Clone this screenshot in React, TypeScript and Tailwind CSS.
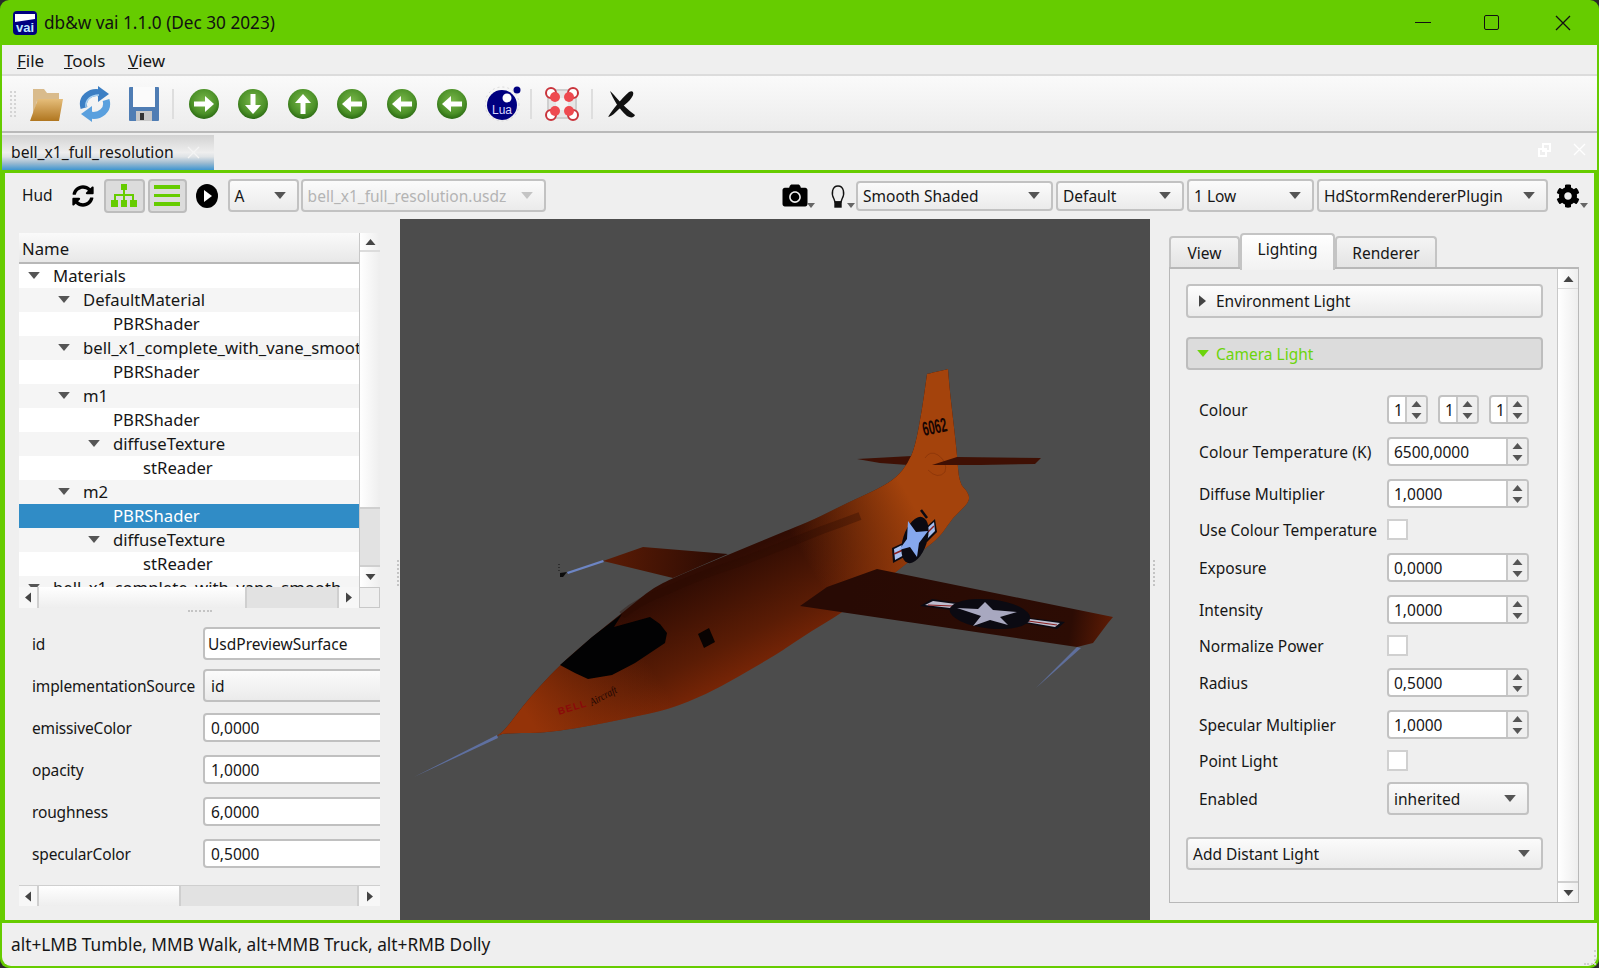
import { FaCamera, FaCog, FaSyncAlt } from 'react-icons/fa';

const treeRows = [
  { name: 'Materials', arrow: 'ml-[9px]', text: 'pl-[34px]', open: true },
  { name: 'DefaultMaterial', arrow: 'ml-[39px]', text: 'pl-[64px]', open: true },
  { name: 'PBRShader', text: 'pl-[94px]' },
  { name: 'bell_x1_complete_with_vane_smoothed_material', arrow: 'ml-[39px]', text: 'pl-[64px]', open: true },
  { name: 'PBRShader', text: 'pl-[94px]' },
  { name: 'm1', arrow: 'ml-[39px]', text: 'pl-[64px]', open: true },
  { name: 'PBRShader', text: 'pl-[94px]' },
  { name: 'diffuseTexture', arrow: 'ml-[69px]', text: 'pl-[94px]', open: true },
  { name: 'stReader', text: 'pl-[124px]' },
  { name: 'm2', arrow: 'ml-[39px]', text: 'pl-[64px]', open: true },
  { name: 'PBRShader', text: 'pl-[94px]', selected: true },
  { name: 'diffuseTexture', arrow: 'ml-[69px]', text: 'pl-[94px]', open: true },
  { name: 'stReader', text: 'pl-[124px]' },
  { name: 'bell_x1_complete_with_vane_smooth', arrow: 'ml-[9px]', text: 'pl-[34px]', open: true },
];

function Tri({ dir = 'down', className = '' }: { dir?: 'up' | 'down' | 'left' | 'right'; className?: string }) {
  const points = {
    up: '0,6 5,0 10,6',
    down: '0,0 10,0 5,6',
    left: '6,0 6,10 0,5',
    right: '0,0 6,5 0,10',
  }[dir];
  const box = dir === 'up' || dir === 'down' ? '0 0 10 6' : '0 0 6 10';
  return (
    <svg viewBox={box} className={className} fill="currentColor">
      <polygon points={points} />
    </svg>
  );
}

function Combo({ label, className, disabled }: { label: string; className: string; disabled?: boolean }) {
  return (
    <div className={`flex items-center justify-between border-2 border-[#c2c2c2] rounded-[4px] bg-gradient-to-b from-[#fbfbfb] to-[#ebebeb] pl-[5px] pr-[11px] ${disabled ? 'text-[#b4b4b4]' : 'text-[#161616]'} ${className}`}>
      <span className="whitespace-nowrap pt-[2px]">{label}</span>
      <Tri className={`w-[12px] h-[7px] ${disabled ? 'text-[#c4c4c4]' : 'text-[#555]'}`} />
    </div>
  );
}

function Spin({ value, className }: { value: string; className: string }) {
  return (
    <div className={`flex h-[29px] border-2 border-[#c2c2c2] rounded-[4px] bg-white overflow-hidden ${className}`}>
      <div className="flex-1 flex items-center pl-[5px] pt-[2px]">{value}</div>
      <div className="w-[21px] flex flex-col items-center justify-center gap-[6px] bg-[#efefef] border-l-2 border-[#c8c8c8] text-[#555]">
        <Tri dir="up" className="w-[11px] h-[6px]" />
        <Tri className="w-[11px] h-[6px]" />
      </div>
    </div>
  );
}

function Check() {
  return <div className="w-[21px] h-[21px] bg-white border-2 border-[#d0d0d0]" />;
}

function ScrollButton({ dir, className }: { dir: 'up' | 'down' | 'left' | 'right'; className: string }) {
  const vertical = dir === 'up' || dir === 'down';
  return (
    <div className={`flex items-center justify-center text-[#444] shrink-0 ${className}`}>
      <Tri dir={dir} className={vertical ? 'w-[11px] h-[6px]' : 'w-[6px] h-[11px]'} />
    </div>
  );
}

function Disc({ rotate }: { rotate: number }) {
  return (
    <svg width="32" height="32" viewBox="0 0 32 32">
      <defs>
        <radialGradient id="disc" cx="50%" cy="40%" r="60%">
          <stop offset="0%" stopColor="#79b64a" />
          <stop offset="70%" stopColor="#4c9128" />
          <stop offset="100%" stopColor="#2a6a12" />
        </radialGradient>
      </defs>
      <circle cx="16" cy="16" r="15" fill="url(#disc)" />
      <path
        d="M6 13.5h11V8l9 8-9 8v-5.500H6z"
        fill="#fff"
        transform={`rotate(${rotate} 16 16)`}
      />
    </svg>
  );
}

function ToolSep({ className }: { className: string }) {
  return <div className={`w-[2px] h-[30px] bg-[#dedede] ${className}`} />;
}

// outline of the fuselage, repeated points keep a corner sharp
const bodyPoints = [
  [497, 736], [497, 736], [505, 730], [522, 707], [540, 686], [560, 665], [592, 637], [622, 613], [638, 600], [653, 588],
  [673, 578], [730, 554], [788, 530], [813, 520], [847, 503], [880, 488], [897, 477], [908, 463], [915, 447], [922, 410],
  [927, 374], [927, 374], [948, 369], [948, 369], [950, 393], [957, 453], [959, 483], [968, 492], [970, 502], [953, 517],
  [940, 537], [923, 550], [895, 573], [842, 613], [813, 630], [780, 652], [772, 657], [738, 677], [705, 695], [672, 708],
  [652, 713], [605, 723], [565, 730], [538, 733], [505, 733],
];

function smoothPath(points: number[][]) {
  let d = `M${points[0][0]} ${points[0][1]}`;
  for (let i = 1; i < points.length; i++) {
    const next = points[(i + 1) % points.length];
    const mx = (points[i][0] + next[0]) / 2;
    const my = (points[i][1] + next[1]) / 2;
    d += `Q${points[i][0]} ${points[i][1]} ${mx} ${my}`;
  }
  return d + 'Z';
}

function Plane() {
  const body = smoothPath(bodyPoints);
  return (
    <svg viewBox="400 350 740 450" width="740" height="450" className="mt-[131px]">
      <defs>
        <linearGradient id="bodyBase" gradientUnits="userSpaceOnUse" x1="730" y1="560" x2="790" y2="680">
          <stop offset="0%" stopColor="#300c03" />
          <stop offset="55%" stopColor="#5a1c05" />
          <stop offset="100%" stopColor="#8a2b07" />
        </linearGradient>
        <linearGradient id="bodyTail" gradientUnits="userSpaceOnUse" x1="800" y1="550" x2="905" y2="490">
          <stop offset="0%" stopColor="#a4430c" stopOpacity="0" />
          <stop offset="100%" stopColor="#a4430c" />
        </linearGradient>
        <linearGradient id="bodyNose" gradientUnits="userSpaceOnUse" x1="640" y1="650" x2="530" y2="720">
          <stop offset="0%" stopColor="#943308" stopOpacity="0" />
          <stop offset="100%" stopColor="#943308" />
        </linearGradient>
        <linearGradient id="wingR" gradientUnits="userSpaceOnUse" x1="850" y1="590" x2="1110" y2="630">
          <stop offset="0%" stopColor="#280a04" />
          <stop offset="85%" stopColor="#2c0c04" />
          <stop offset="100%" stopColor="#5c1b05" />
        </linearGradient>
        <linearGradient id="wingL" gradientUnits="userSpaceOnUse" x1="610" y1="555" x2="720" y2="565">
          <stop offset="0%" stopColor="#591b05" />
          <stop offset="100%" stopColor="#2c0b03" />
        </linearGradient>
      </defs>
      <path d="M497 735L414 777L498 738Z" fill="#5f70a0" />
      <path d="M1077 647L1036 688L1081 648Z" fill="#5f6f9c" />
      <path d="M603 560L567 572L568 574L604 562Z" fill="#6d85c4" />
      <path d="M560 573L567 572L563 577L560 577Z" fill="#0c0c0c" />
      <path d="M559 564V572" stroke="#111" strokeDasharray="1 2" />
      <path d="M603 561L643 547L728 554L673 578Z" fill="url(#wingL)" />
      <path d="M857 459L912 456L908 465L880 463Z" fill="#3f1004" />
      <path d={body} fill="url(#bodyBase)" />
      <path d={body} fill="url(#bodyTail)" />
      <path d={body} fill="url(#bodyNose)" />
      <path d="M622 615Q640 600 668 590Q700 575 738 563Q780 547 822 530Q842 523 860 516" stroke="#2c0b03" strokeWidth="8" fill="none" opacity="0.35" />
      <path d="M925 458Q930 450 938 455Q948 462 945 472Q938 480 928 470" stroke="#6a2206" fill="none" opacity="0.35" />
      <path d="M932 465L957 457L1041 458L1035 464L980 465Z" fill="#3f1004" />
      <path d="M877 569L1113 617L1108 623L1093 643L1077 647L800 606L827 587Z" fill="url(#wingR)" />
      <path d="M560 665L592 637L622 614L614 627L650 617L660 624L667 633L665 643L635 663L612 675L588 679L575 673Z" fill="#020203" />
      <path d="M698 634L709 628L715 642L704 648Z" fill="#090302" />
      <path d="M920 606L932 599L960 603L952 610Z" fill="#0b0a12" />
      <path d="M925 605L933 601L956 604L950 608Z" fill="#bdbdcf" />
      <path d="M928 605L953 606" stroke="#8a2020" strokeWidth="1.200" />
      <path d="M1020 617L1065 622L1057 629L1018 622Z" fill="#0b0a12" />
      <path d="M1022 618L1060 623L1055 627L1020 621Z" fill="#bdbdcf" />
      <path d="M1021 620L1057 625" stroke="#8a2020" strokeWidth="1.200" />
      <ellipse cx="990" cy="614" rx="40.500" ry="14.500" fill="#0b0a12" transform="rotate(6 990 614)" />
      <path d="M985 602L993 610L1017 612L1000 617L1008 625L990 620L973 626L981 616L957 608L978 609Z" fill="#a8a8c0" />
      <path d="M892 548L905 542L908 555L893 563Z" fill="#0b0a12" />
      <path d="M894 549L904 544L906 554L895 560Z" fill="#a8c0f0" />
      <path d="M894 554L905 549" stroke="#8a2020" strokeWidth="1.500" />
      <path d="M923 530L935 519L937 532L927 542Z" fill="#0b0a12" />
      <path d="M925 530L934 522L935 531L927 539Z" fill="#a8c0f0" />
      <path d="M926 534L934 526" stroke="#8a2020" strokeWidth="1.500" />
      <ellipse cx="915" cy="540" rx="12" ry="24" fill="#0b0a12" transform="rotate(18 915 540)" />
      <path d="M921 510L927 518" stroke="#0b0a12" strokeWidth="2.500" />
      <path d="M908 521L916 532L928 531L919 543L917 557L910 547L899 550L907 539Z" fill="#86a8ee" />
      <text x="0" y="0" fontSize="20" fontWeight="700" fill="#180503" fontFamily="'Liberation Sans', sans-serif" transform="translate(924 436) rotate(-12) scale(0.55 1)">6062</text>
      <text x="0" y="0" fontSize="10" fontWeight="700" fill="#8a0a0a" letterSpacing="1" fontFamily="'Liberation Sans', sans-serif" transform="translate(559 715) rotate(-17)">BELL</text>
      <text x="0" y="0" fontSize="11" fontStyle="italic" fill="#1c0603" fontFamily="'Liberation Serif', serif" transform="translate(592 706) rotate(-28) scale(0.85 1)">Aircraft</text>
    </svg>
  );
}

const formRows = [
  { label: 'id', value: 'UsdPreviewSurface', kind: 'text', cls: 'h-[33px]' },
  { label: 'implementationSource', value: 'id', kind: 'combo', cls: 'h-[33px] mt-[9px]' },
  { label: 'emissiveColor', value: '0,0000', kind: 'num', cls: 'h-[29px] mt-[11px]' },
  { label: 'opacity', value: '1,0000', kind: 'num', cls: 'h-[29px] mt-[13px]' },
  { label: 'roughness', value: '6,0000', kind: 'num', cls: 'h-[29px] mt-[13px]' },
  { label: 'specularColor', value: '0,5000', kind: 'num', cls: 'h-[29px] mt-[13px]' },
];

export default function App() {
  return (
    <div className="w-[1599px] h-[968px] bg-[#2a2a2a] overflow-hidden font-['Noto_Sans',sans-serif] text-[15.5px] text-[#161616]">
      <div className="w-full h-full flex flex-col bg-[#66cc00] rounded-[9px] px-[2px] pb-[2px]">
        {/* title bar */}
        <div className="h-[45px] flex items-center shrink-0 -mx-[2px]">
          <svg width="24" height="24" viewBox="0 0 24 24" className="ml-[13px]">
            <rect width="24" height="24" rx="4" fill="#000080" />
            <path d="M2 3h20v5L2 11z" fill="#fff" />
            <text x="12" y="21" textAnchor="middle" fontSize="13" fontWeight="700" fill="#bfe8ff" fontFamily="'Liberation Sans', sans-serif">vai</text>
          </svg>
          <span className="ml-[7px] text-[17.200px] text-[#111] whitespace-nowrap">db&amp;w vai 1.1.0 (Dec 30 2023)</span>
          <div className="ml-auto flex items-center">
            <div className="w-[16px] h-[1.500px] bg-[#111] mr-[53px]" />
            <div className="w-[15px] h-[15px] border-[1.500px] border-[#111] rounded-[2px] mr-[56px]" />
            <svg width="16" height="16" viewBox="0 0 16 16" className="mr-[28px]">
              <path d="M1 1l14 14M15 1L1 15" stroke="#111" strokeWidth="1.300" />
            </svg>
          </div>
        </div>

        {/* menu */}
        <div className="h-[29px] bg-[#efefef] flex items-center shrink-0 pl-[15px] pt-[3px] text-[17px]">
          <span className="w-[47px]"><u>F</u>ile</span>
          <span className="w-[64px]"><u>T</u>ools</span>
          <span><u>V</u>iew</span>
        </div>
        <div className="h-[2px] bg-[#dcdcdc] shrink-0" />

        {/* toolbar */}
        <div className="h-[55px] shrink-0 flex items-center bg-gradient-to-b from-[#fafafa] to-[#ececec] pl-[8px]">
          <div className="w-[6px] h-[26px] border-x-2 border-dotted border-[#d4d4d4]" />
          <svg width="36" height="36" viewBox="0 0 36 36" className="ml-[12px]">
            <defs>
              <linearGradient id="fold" x1="0" y1="0" x2="0" y2="1">
                <stop offset="0%" stopColor="#e5bd7a" />
                <stop offset="100%" stopColor="#b0761f" />
              </linearGradient>
            </defs>
            <path d="M5 32V3h11l3 4h12v8H9L5 32z" fill="#d9bb8c" />
            <path d="M10 13h25L31 35H2z" fill="url(#fold)" />
          </svg>
          <svg width="34" height="36" viewBox="0 0 34 36" className="ml-[14px]">
            <path d="M6 22C3 12 12 5 22 7" stroke="#3c7fc4" strokeWidth="7" fill="none" />
            <path d="M20 0l11 8-11 8z" fill="#3c7fc4" />
            <path d="M28 14C31 24 22 31 12 29" stroke="#5aa0de" strokeWidth="7" fill="none" />
            <path d="M14 36L3 28l11-8z" fill="#5aa0de" />
            <path d="M8 21C7 14 13 9 21 9" stroke="#a9d2f2" strokeWidth="1.500" fill="none" />
          </svg>
          <svg width="32" height="36" viewBox="0 0 32 36" className="ml-[16px]">
            <rect x="1" y="1" width="30" height="34" rx="1" fill="#4f7db4" />
            <rect x="5" y="1" width="22" height="20" fill="#fbfbfb" />
            <rect x="8" y="25" width="16" height="10" fill="#c8c8c8" />
            <rect x="12" y="27" width="4" height="7" fill="#333" />
          </svg>
          <ToolSep className="ml-[12px]" />
          <div className="ml-[14px]"><Disc rotate={0} /></div>
          <div className="ml-[17px]"><Disc rotate={90} /></div>
          <div className="ml-[18px]"><Disc rotate={-90} /></div>
          <div className="ml-[17px]"><Disc rotate={180} /></div>
          <div className="ml-[18px]"><Disc rotate={180} /></div>
          <div className="ml-[18px]"><Disc rotate={180} /></div>
          <svg width="36" height="36" viewBox="0 0 36 36" className="ml-[17px]">
            <circle cx="17" cy="18" r="17" fill="none" stroke="#d8d8d8" strokeDasharray="2 3" />
            <circle cx="17" cy="19" r="15" fill="#000080" />
            <circle cx="22" cy="12" r="4.500" fill="#fff" />
            <circle cx="32" cy="4" r="3.500" fill="#000080" />
            <text x="17" y="28" textAnchor="middle" fontSize="12" fill="#d8d8ff" fontFamily="'Liberation Sans', sans-serif">Lua</text>
          </svg>
          <ToolSep className="ml-[9px]" />
          <svg width="36" height="36" viewBox="0 0 36 36" className="ml-[12px]">
            <rect x="4" y="4" width="28" height="28" rx="3" fill="#e6e6e6" stroke="#cfcfcf" strokeWidth="2" />
            <rect x="12" y="12" width="12" height="12" fill="#f4f4f4" />
            {[[7, 7], [29, 7], [7, 29], [29, 29]].map(([x, y]) => (
              <g key={`${x}-${y}`}>
                <circle cx={x} cy={y} r="5" fill="#fff" stroke="#c9343c" strokeWidth="2" />
                <circle cx={x < 18 ? x + 4 : x - 4} cy={y < 18 ? y + 4 : y - 4} r="5" fill="#ee4a50" />
              </g>
            ))}
          </svg>
          <ToolSep className="ml-[11px]" />
          <svg width="30" height="30" viewBox="0 0 30 30" className="ml-[14px]">
            <path d="M3 2C8 6 14 16 28 26C27 29 23 29 20 27C12 20 6 10 3 2Z" fill="#111" />
            <path d="M26 3C28 7 20 15 12 20C8 24 5 27 1 28C6 20 14 10 22 3C24 2 25 2 26 3Z" fill="#111" />
          </svg>
        </div>
        <div className="h-[2px] bg-[#b9b9b9] shrink-0" />

        {/* document tabs */}
        <div className="h-[37px] bg-[#efefef] flex items-end shrink-0">
          <div className="w-[212px] h-[35px] flex items-center pl-[9px] text-[15.700px] bg-[linear-gradient(to_bottom,#d2d2d2_0%,#eeeeee_50%,#dfe3e6_62%,#9dbbd1_80%,#3f96d0_100%)]">
            <span className="whitespace-nowrap">bell_x1_full_resolution</span>
            <svg width="13" height="13" viewBox="0 0 13 13" className="ml-[13px]">
              <path d="M1 1l11 11M12 1L1 12" stroke="#f4f4f4" strokeWidth="1.300" />
            </svg>
          </div>
          <div className="ml-auto h-[37px] flex items-center pb-[4px]">
            <svg width="13" height="14" viewBox="0 0 13 14" className="mr-[22px]" fill="none" stroke="#fff" strokeWidth="2">
              <rect x="5" y="1" width="7" height="7" />
              <rect x="1" y="6" width="7" height="7" />
            </svg>
            <svg width="13" height="13" viewBox="0 0 13 13" className="mr-[11px]">
              <path d="M1 1l11 11M12 1L1 12" stroke="#fff" strokeWidth="1.300" />
            </svg>
          </div>
        </div>

        {/* main panel */}
        <div className="flex-1 min-h-0 flex flex-col bg-[#efefef] border-[3px] border-[#66cc00]">
          {/* hud row */}
          <div className="h-[46px] shrink-0 flex items-center pb-[1px]">
            <span className="ml-[17px]">Hud</span>
            <FaSyncAlt className="ml-[19px] w-[22px] h-[22px] text-black" />
            <div className="ml-[10px] w-[41px] h-[34px] flex items-center justify-center bg-[#dcdcdc] border-2 border-[#bdbdbd] rounded-[4px]">
              <svg width="26" height="24" viewBox="0 0 26 24" fill="#66cc00">
                <rect x="10" y="0" width="6" height="6" />
                <rect x="12" y="6" width="2" height="5" />
                <rect x="3" y="10" width="20" height="2" />
                <rect x="3" y="10" width="2" height="6" />
                <rect x="12" y="10" width="2" height="6" />
                <rect x="21" y="10" width="2" height="6" />
                <rect x="0" y="16" width="7" height="7" />
                <rect x="10" y="16" width="6" height="7" />
                <rect x="19" y="16" width="7" height="7" />
              </svg>
            </div>
            <div className="ml-[3px] w-[39px] h-[34px] flex flex-col items-center justify-center gap-[5px] bg-[#dcdcdc] border-2 border-[#bdbdbd] rounded-[4px]">
              <div className="w-[26px] h-[3.500px] bg-[#66cc00]" />
              <div className="w-[26px] h-[3.500px] bg-[#66cc00]" />
              <div className="w-[26px] h-[3.500px] bg-[#66cc00]" />
            </div>
            <svg width="22" height="24" viewBox="0 0 22 24" className="ml-[9px]">
              <ellipse cx="11" cy="12" rx="11" ry="12" fill="#000" />
              <path d="M8 6l8 6-8 6z" fill="#fff" />
            </svg>
            <Combo label="A" className="ml-[10px] w-[71px] h-[33px]" />
            <Combo label="bell_x1_full_resolution.usdz" className="ml-[2px] w-[245px] h-[33px]" disabled />
            <div className="ml-auto flex items-center relative">
              <FaCamera className="w-[28px] h-[25px] text-black" />
              <Tri className="w-[8px] h-[5px] text-[#666] mt-[20px] -ml-[2px]" />
              <svg width="16" height="24" viewBox="0 0 16 24" className="ml-[15px]" fill="none" stroke="#111" strokeWidth="1.400">
                <path d="M4 15C1 10 2 2 8 2C14 2 15 10 12 15L11 18H5z" />
                <rect x="5" y="18" width="6" height="5" fill="#111" />
              </svg>
              <Tri className="w-[8px] h-[5px] text-[#666] mt-[20px] ml-[1px]" />
              <Combo label="Smooth Shaded" className="ml-[1px] w-[197px] h-[30px]" />
              <Combo label="Default" className="ml-[3px] w-[128px] h-[30px]" />
              <Combo label="1 Low" className="ml-[3px] w-[127px] h-[33px]" />
              <Combo label="HdStormRendererPlugin" className="ml-[3px] w-[231px] h-[33px]" />
              <FaCog className="ml-[8px] w-[24px] h-[26px] text-black" />
              <Tri className="w-[8px] h-[5px] text-[#666] mt-[20px] mr-[6px]" />
            </div>
          </div>

          <div className="flex-1 min-h-0 flex">
            {/* left pane */}
            <div className="w-[395px] shrink-0 pl-[14px] pt-[14px] relative">
              <div className="w-[361px] h-[375px] flex flex-col">
                <div className="flex h-[354px] text-[16.700px]">
                  <div className="w-[340px] flex flex-col overflow-hidden bg-white">
                    <div className="h-[31px] shrink-0 flex items-center pl-[3px] pt-[2px] bg-gradient-to-b from-[#fafafa] to-[#e8e8e8] border-b-2 border-[#b8b8b8]">Name</div>
                    {treeRows.map((row, i) => (
                      <div
                        key={i}
                        className={`h-[24px] shrink-0 flex items-center relative whitespace-nowrap ${row.text} ${row.selected ? 'bg-[#308cc6] text-white' : i % 2 ? 'bg-[#f5f5f5]' : 'bg-white'}`}
                      >
                        {row.arrow && <Tri className={`absolute left-0 top-[8px] w-[12px] h-[7px] text-[#555] ${row.arrow}`} />}
                        {row.name}
                      </div>
                    ))}
                  </div>
                  <div className="w-[21px] flex flex-col border-l border-[#c8c8c8] bg-gradient-to-r from-[#ffffff] to-[#eeeeee]">
                    <ScrollButton dir="up" className="h-[19px] border-b-2 border-[#dcdcdc]" />
                    <div className="flex-1 flex flex-col justify-end">
                      <div className="h-[58px] bg-[#e2e2e2] border-t-2 border-[#cfcfcf]" />
                    </div>
                    <ScrollButton dir="down" className="h-[22px] border-t-2 border-[#cfcfcf]" />
                  </div>
                </div>
                <div className="flex h-[21px]">
                  <ScrollButton dir="left" className="w-[20px] border-r-2 border-[#cfcfcf] bg-[#f7f7f7]" />
                  <div className="w-[206px] bg-gradient-to-b from-[#ffffff] to-[#eeeeee]" />
                  <div className="w-[94px] bg-[#e2e2e2] border-x-2 border-[#cfcfcf]" />
                  <ScrollButton dir="right" className="w-[20px] bg-[#f7f7f7]" />
                  <div className="w-[21px] border border-[#c8c8c8]" />
                </div>
              </div>
              <div className="h-[19px] flex justify-center items-start pt-[2px] pr-[20px]">
                <div className="w-[24px] h-[2px] border-t-2 border-dotted border-[#c4c4c4]" />
              </div>
              <div className="w-[361px] h-[279px] overflow-hidden">
                {formRows.map(row => (
                  <div key={row.label} className={`flex items-center ${row.cls}`}>
                    <span className="w-[184px] shrink-0 pl-[13px] pt-[2px] whitespace-nowrap tracking-[-0.15px]">{row.label}</span>
                    <div className={`w-[260px] h-full shrink-0 flex items-center pt-[2px] border-2 border-[#c0c0c0] rounded-[4px] ${row.kind === 'text' ? 'pl-[3px] bg-white' : row.kind === 'combo' ? 'pl-[6px] bg-gradient-to-b from-[#fbfbfb] to-[#ebebeb]' : 'pl-[6px] bg-white'}`}>
                      {row.value}
                    </div>
                  </div>
                ))}
                <div className="flex h-[21px] mt-[17px] border-t border-[#cfcfcf]">
                  <ScrollButton dir="left" className="w-[20px] border-r-2 border-[#cfcfcf] bg-[#f7f7f7]" />
                  <div className="w-[140px] bg-gradient-to-b from-[#ffffff] to-[#eeeeee]" />
                  <div className="w-[180px] bg-[#e2e2e2] border-x-2 border-[#cfcfcf]" />
                  <ScrollButton dir="right" className="w-[21px] bg-[#f7f7f7]" />
                </div>
              </div>
              <div className="absolute right-[1px] top-[341px] h-[26px] w-[2px] border-l-2 border-dotted border-[#c4c4c4]" />
            </div>

            {/* viewport */}
            <div className="w-[750px] shrink-0 bg-[#4c4c4c] overflow-hidden">
              <Plane />
            </div>

            {/* right pane */}
            <div className="flex-1 min-w-0 pl-[19px] pt-[14px] relative">
              <div className="flex items-end h-[34px] relative z-10">
                <div className="w-[71px] h-[31px] flex items-center justify-center pt-[2px] bg-gradient-to-b from-[#f4f4f4] to-[#e4e4e4] border-2 border-b-0 border-[#c4c4c4] rounded-t-[4px]">View</div>
                <div className="w-[95px] h-[37px] -mb-[3px] pb-[6px] flex items-center justify-center bg-gradient-to-b from-[#ffffff] to-[#f2f2f2] border-2 border-b-0 border-[#c4c4c4] rounded-t-[4px]">Lighting</div>
                <div className="w-[102px] h-[31px] flex items-center justify-center pt-[2px] bg-gradient-to-b from-[#f4f4f4] to-[#e4e4e4] border-2 border-b-0 border-[#c4c4c4] rounded-t-[4px]">Renderer</div>
              </div>
              <div className="w-[410px] h-[636px] flex border border-[#b8b8b8] border-t-2">
                <div className="flex-1 pl-[16px] pr-[14px] pt-[15px]">
                  <div className="h-[34px] flex items-center border-2 border-[#c2c2c2] rounded-[4px] bg-gradient-to-b from-[#fdfdfd] to-[#ebebeb]">
                    <Tri dir="right" className="ml-[11px] w-[7px] h-[12px] text-[#444]" />
                    <span className="ml-[10px] pt-[2px]">Environment Light</span>
                  </div>
                  <div className="h-[33px] mt-[19px] flex items-center border-2 border-[#bdbdbd] rounded-[4px] bg-[#dcdcdc] text-[#6cd40c]">
                    <Tri className="ml-[9px] w-[12px] h-[7px]" />
                    <span className="ml-[7px] pt-[2px]">Camera Light</span>
                  </div>
                  <div className="pl-[13px] pt-[25px]">
                    <div className="flex items-center h-[29px]">
                      <span className="w-[188px] pt-[2px]">Colour</span>
                      <Spin value="1" className="w-[41px]" />
                      <Spin value="1" className="w-[41px] ml-[10px]" />
                      <Spin value="1" className="w-[40px] ml-[10px]" />
                    </div>
                    <div className="flex items-center h-[29px] mt-[13px]">
                      <span className="w-[188px] pt-[2px] whitespace-nowrap tracking-[0.15px]">Colour Temperature (K)</span>
                      <Spin value="6500,0000" className="w-[142px]" />
                    </div>
                    <div className="flex items-center h-[29px] mt-[13px]">
                      <span className="w-[188px] pt-[2px]">Diffuse Multiplier</span>
                      <Spin value="1,0000" className="w-[142px]" />
                    </div>
                    <div className="flex items-center h-[21px] mt-[11px]">
                      <span className="w-[188px] pt-[2px] whitespace-nowrap">Use Colour Temperature</span>
                      <Check />
                    </div>
                    <div className="flex items-center h-[29px] mt-[13px]">
                      <span className="w-[188px] pt-[2px]">Exposure</span>
                      <Spin value="0,0000" className="w-[142px]" />
                    </div>
                    <div className="flex items-center h-[29px] mt-[13px]">
                      <span className="w-[188px] pt-[2px]">Intensity</span>
                      <Spin value="1,0000" className="w-[142px]" />
                    </div>
                    <div className="flex items-center h-[21px] mt-[11px]">
                      <span className="w-[188px] pt-[2px]">Normalize Power</span>
                      <Check />
                    </div>
                    <div className="flex items-center h-[29px] mt-[12px]">
                      <span className="w-[188px] pt-[2px]">Radius</span>
                      <Spin value="0,5000" className="w-[142px]" />
                    </div>
                    <div className="flex items-center h-[29px] mt-[13px]">
                      <span className="w-[188px] pt-[2px]">Specular Multiplier</span>
                      <Spin value="1,0000" className="w-[142px]" />
                    </div>
                    <div className="flex items-center h-[21px] mt-[11px]">
                      <span className="w-[188px] pt-[2px]">Point Light</span>
                      <Check />
                    </div>
                    <div className="flex items-center h-[33px] mt-[11px]">
                      <span className="w-[188px] pt-[2px]">Enabled</span>
                      <Combo label="inherited" className="w-[142px] h-[33px]" />
                    </div>
                  </div>
                  <Combo label="Add Distant Light" className="h-[33px] mt-[22px]" />
                </div>
                <div className="w-[21px] flex flex-col border-l border-[#c8c8c8] bg-gradient-to-r from-[#ffffff] to-[#eeeeee]">
                  <ScrollButton dir="up" className="h-[20px] border-b border-[#dcdcdc]" />
                  <div className="flex-1" />
                  <ScrollButton dir="down" className="h-[21px] border-t-2 border-[#cfcfcf]" />
                </div>
              </div>
              <div className="absolute left-[3px] top-[341px] h-[26px] w-[2px] border-l-2 border-dotted border-[#c4c4c4]" />
            </div>
          </div>
        </div>

        {/* status bar */}
        <div className="h-[43px] shrink-0 flex items-center pl-[9px] bg-[#efefef] rounded-bl-[9px] rounded-br-[9px] relative text-[17.300px]">
          <span className="whitespace-nowrap">alt+LMB Tumble, MMB Walk, alt+MMB Truck, alt+RMB Dolly</span>
          <div className="absolute right-[1px] bottom-[1px] w-[12px] h-[15px] border-r-2 border-b-2 border-dotted border-[#cfcfcf]" />
        </div>
      </div>
    </div>
  );
}
